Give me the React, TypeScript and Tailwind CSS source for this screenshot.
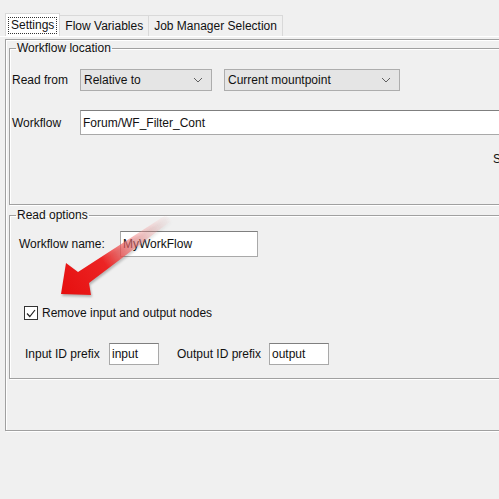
import type { ReactNode } from 'react';

function Chevron() {
  return (
    <svg width="10" height="6" viewBox="0 0 10 6" className="shrink-0">
      <polyline points="1,1 5,5 9,1" fill="none" stroke="#606060" strokeWidth="1" />
    </svg>
  );
}

function Combo({ value, width }: { value: string; width: string }) {
  return (
    <div className={`${width} h-[22px] flex items-center justify-between pl-[3px] pr-[8px] bg-[#e5e5e5] border border-[#adadad]`}>
      <span>{value}</span>
      <Chevron />
    </div>
  );
}

function Field({ value, className }: { value: string; className: string }) {
  return (
    <div className={`${className} flex items-center pl-[2px] bg-white border border-[#a9a9a9] border-t-[#7f7f7f] overflow-hidden whitespace-nowrap`}>
      {value}
    </div>
  );
}

function Group({ title, className, children }: { title: string; className: string; children: ReactNode }) {
  return (
    <fieldset className={`${className} border border-[#a0a0a0] shadow-[inset_1px_1px_0_#fff,1px_1px_0_#fff] pl-[1px]`}>
      <legend className="ml-[5px] px-[1px] leading-[14px]">{title}</legend>
      {children}
    </fieldset>
  );
}

function Tab({ label, selected }: { label: string; selected?: boolean }) {
  if (selected) {
    return (
      <div className="h-[23px] px-[2px] flex items-center bg-white border border-b-0 border-[#d9d9d9]">
        <span className="px-[2px] py-[1px] border border-dotted border-[#333] leading-[13px]">{label}</span>
      </div>
    );
  }
  return (
    <div className="h-[21px] px-[5px] flex items-center bg-[#f0f0f0] border border-b-0 border-l-0 border-[#d9d9d9]">
      {label}
    </div>
  );
}

export default function App() {
  return (
    <div className="relative w-[499px] h-[499px] overflow-hidden bg-[#f0f0f0] text-[12px] text-[#111] font-['Liberation_Sans',Arial,sans-serif]">
      <div className="flex items-end pl-[5px] h-[37px] border-b border-white">
        <Tab label="Settings" selected />
        <Tab label="Flow Variables" />
        <Tab label="Job Manager Selection" />
      </div>

      <div className="ml-[5px] mt-[2px] w-[560px] h-[392px] pl-[3px] pt-[1px] border border-[#a0a0a0] shadow-[inset_1px_1px_0_#fff,1px_1px_0_#fff]">
        <Group title="Workflow location" className="h-[164px]">
          <div className="flex items-center h-[22px] mt-[14px] pl-[1px]">
            <span className="w-[68px]">Read from</span>
            <Combo value="Relative to" width="w-[132px]" />
            <div className="ml-[12px]">
              <Combo value="Current mountpoint" width="w-[176px]" />
            </div>
          </div>
          <div className="flex items-center h-[25px] mt-[19px] pl-[1px]">
            <span className="w-[68px]">Workflow</span>
            <Field value="Forum/WF_Filter_Cont" className="flex-1 h-[25px] mr-[8px]" />
          </div>
          <div className="mt-[17px] pl-[482px] leading-[14px]">Select...</div>
        </Group>

        <Group title="Read options" className="h-[171px] mt-[3px]">
          <div className="flex items-center h-[26px] mt-[9px] pl-[8px]">
            <span className="w-[101px]">Workflow name:</span>
            <Field value="MyWorkFlow" className="w-[138px] h-[26px]" />
          </div>
          <label className="flex items-center gap-[4px] mt-[49px] ml-[13px] h-[14px]">
            <span className="w-[14px] h-[14px] flex items-center justify-center bg-white border border-[#333]">
              <svg width="10" height="9" viewBox="0 0 10 9">
                <polyline points="1,4.5 3.8,7.5 9,1" fill="none" stroke="#222" strokeWidth="1.2" />
              </svg>
            </span>
            <span>Remove input and output nodes</span>
          </label>
          <div className="flex items-center h-[22px] mt-[23px] pl-[14px]">
            <span className="w-[84px]">Input ID prefix</span>
            <Field value="input" className="w-[50px] h-[22px]" />
            <span className="ml-[18px] w-[92px]">Output ID prefix</span>
            <Field value="output" className="w-[60px] h-[22px]" />
          </div>
        </Group>
      </div>

      <svg
        className="absolute left-0 top-0 pointer-events-none drop-shadow-[1px_2px_1px_rgba(0,0,0,0.25)]"
        width="499"
        height="499"
        viewBox="0 0 499 499"
      >
        <defs>
          <linearGradient id="arrowFill" x1="62" y1="293" x2="168" y2="218" gradientUnits="userSpaceOnUse">
            <stop offset="0" stopColor="#e60f0f" />
            <stop offset="0.4" stopColor="#ec2424" />
            <stop offset="0.65" stopColor="#f07070" stopOpacity="0.6" />
            <stop offset="1" stopColor="#f4b0b0" stopOpacity="0.05" />
          </linearGradient>
        </defs>
        <polygon points="61,294 66,263 78,272 166,215 171,221 89,283 91,295" fill="url(#arrowFill)" />
      </svg>
    </div>
  );
}
